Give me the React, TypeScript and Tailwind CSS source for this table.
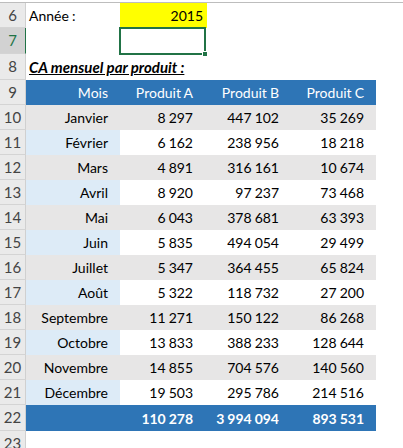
import React from 'react';

const rows = [
  ['Janvier', '8 297', '447 102', '35 269'],
  ['Février', '6 162', '238 956', '18 218'],
  ['Mars', '4 891', '316 161', '10 674'],
  ['Avril', '8 920', '97 237', '73 468'],
  ['Mai', '6 043', '378 681', '63 393'],
  ['Juin', '5 835', '494 054', '29 499'],
  ['Juillet', '5 347', '364 455', '65 824'],
  ['Août', '5 322', '118 732', '27 200'],
  ['Septembre', '11 271', '150 122', '86 268'],
  ['Octobre', '13 833', '388 233', '128 644'],
  ['Novembre', '14 855', '704 576', '140 560'],
  ['Décembre', '19 503', '295 786', '214 516'],
];

const RowHead: React.FC<{ n: number; selected?: boolean }> = ({ n, selected }) => (
  <div
    className={
      'w-[26px] shrink-0 h-full flex items-center justify-center text-[15px] border-b border-r border-b-[#d4d4d4] ' +
      (selected ? 'bg-[#d2d2d2] text-[#217346] border-r-[#217346]' : 'bg-[#eaeaea] text-[#444] border-r-[#d0d0d0]')
    }
  >
    {n}
  </div>
);

const App: React.FC = () => {
  return (
    <div
      className="w-[403px] h-[448px] overflow-hidden bg-white text-[14px] text-black [word-spacing:-0.5px]"
      style={{ fontFamily: 'Lato, "Open Sans", sans-serif' }}
    >
      <div className="h-[2px] bg-white" />
      <div className="h-px bg-[#bdbdbd]" />

      {/* row 6 */}
      <div className="flex h-[25px]">
        <RowHead n={6} />
        <div className="w-[94px] flex items-center pl-[3px]">Année :</div>
        <div className="w-[87px] flex items-center justify-end pr-[4px] bg-[#ffff00]">2015</div>
      </div>

      {/* row 7 */}
      <div className="flex h-[26px]">
        <RowHead n={7} selected />
        <div className="w-[94px]" />
        <div className="relative w-[87px] -ml-px -mt-px h-[28px] border-2 border-[#217346]">
          <div className="absolute -right-[4px] -bottom-[4px] w-[6px] h-[6px] bg-[#217346] border border-white" />
        </div>
      </div>

      {/* row 8 */}
      <div className="flex h-[26px]">
        <RowHead n={8} />
        <div className="flex items-center pl-[3px] text-[15px] [word-spacing:0px] font-bold italic underline whitespace-nowrap">
          CA mensuel par produit :
        </div>
      </div>

      {/* row 9 header */}
      <div className="flex h-[25px]">
        <RowHead n={9} />
        <div className="flex w-[350px] bg-[#2e75b6] text-white">
          <div className="w-[94px] flex items-center justify-end pr-[12px]">Mois</div>
          <div className="w-[87px] flex items-center justify-end pr-[14px]">Produit A</div>
          <div className="w-[85px] flex items-center justify-end pr-[13px]">Produit B</div>
          <div className="w-[84px] flex items-center justify-end pr-[12px]">Produit C</div>
        </div>
      </div>

      {rows.map((r, i) => {
        const even = i % 2 === 0;
        return (
          <div key={r[0]} className="flex h-[25px]">
            <RowHead n={10 + i} />
            <div className={'flex w-[350px] ' + (even ? 'bg-[#e7e6e6]' : 'bg-white')}>
              <div className={'w-[94px] flex items-center justify-end pr-[12px] ' + (even ? '' : 'bg-[#ddebf7]')}>{r[0]}</div>
              <div className="w-[87px] flex items-center justify-end pr-[14px]">{r[1]}</div>
              <div className="w-[85px] flex items-center justify-end pr-[13px]">{r[2]}</div>
              <div className="w-[84px] flex items-center justify-end pr-[12px]">{r[3]}</div>
            </div>
          </div>
        );
      })}

      {/* row 22 totals */}
      <div className="flex h-[26px]">
        <RowHead n={22} />
        <div className="flex w-[350px] bg-[#2e75b6] text-white font-bold">
          <div className="w-[94px]" />
          <div className="w-[87px] flex items-center justify-end pr-[14px]">110 278</div>
          <div className="w-[85px] flex items-center justify-end pr-[13px]">3 994 094</div>
          <div className="w-[84px] flex items-center justify-end pr-[12px]">893 531</div>
        </div>
      </div>

      <div className="flex h-[25px]">
        <RowHead n={23} />
      </div>
    </div>
  );
};

export default App;
